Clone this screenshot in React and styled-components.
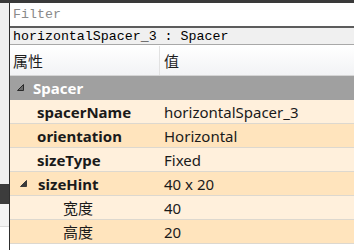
import React from "react";
import styled, { createGlobalStyle } from "styled-components";

const Global = createGlobalStyle`
  html, body { margin: 0; padding: 0; background: #ffffff; }
  body { width: 354px; height: 250px; overflow: hidden; font-family: "Noto Sans", "Noto Sans CJK SC", sans-serif; }
`;

const Page = styled.div`
  width: 354px;
  height: 250px;
  display: flex;
  flex-direction: column;
`;

const TopBar = styled.div`
  height: 3px;
  background: #3a3a3a;
  flex: none;
`;

const Body = styled.div`
  flex: 1;
  display: flex;
  min-height: 0;
`;

const LeftStrip = styled.div`
  width: 9px;
  flex: none;
  display: flex;
  flex-direction: column;
  background: #ffffff;
`;

const StripSeg = styled.div`
  height: ${(p) => p.$h}px;
  background: ${(p) => p.$bg};
  border-bottom: ${(p) => (p.$line ? "1px solid #dcdcdc" : "none")};
  flex: none;
`;

const Panel = styled.div`
  flex: 1;
  display: flex;
  flex-direction: column;
  border-left: 1px solid #2e2e2e;
  background: #ffffff;
`;

const FilterBox = styled.div`
  height: 23px;
  display: flex;
  align-items: center;
  padding-left: 3px;
  font-family: "Liberation Mono", monospace;
  font-size: 13.3px;
  color: #8a8a8a;
  background: #ffffff;
  border-bottom: 2px solid #5c5c5c;
`;

const ObjectLabel = styled.div`
  height: 16px;
  display: flex;
  align-items: center;
  padding-left: 3px;
  font-family: "Liberation Mono", monospace;
  font-size: 13.3px;
  color: #000;
  background: #f0f0f0;
  border-bottom: 1px solid #a8a8a8;
  white-space: pre;
`;

const Header = styled.div`
  height: 29px;
  margin-top: 1px;
  display: grid;
  grid-template-columns: 150px 1fr;
  background: linear-gradient(#ffffff, #f2f3f5);
  border-bottom: 1px solid #d5d5d5;
`;

const HeaderCell = styled.div`
  display: flex;
  align-items: center;
  padding-left: ${(p) => p.$pl}px;
  font-size: 15px;
  color: #1e1e1e;
  border-right: ${(p) => (p.$sep ? "1px solid #e2e2e2" : "none")};
`;

const Row = styled.div`
  height: 23px;
  display: grid;
  grid-template-columns: 150px 1fr;
  background: ${(p) => p.$bg};
  border-bottom: 1px solid ${(p) => p.$line};
`;

const NameCell = styled.div`
  display: flex;
  align-items: center;
  position: relative;
  padding-left: ${(p) => p.$pl}px;
  font-size: 15px;
  font-weight: ${(p) => (p.$bold ? 700 : 400)};
  color: ${(p) => p.$color || "#1a1a1a"};
  white-space: nowrap;
`;

const ValueCell = styled.div`
  display: flex;
  align-items: center;
  padding-left: 4px;
  font-size: 15px;
  color: #1a1a1a;
  white-space: nowrap;
`;

const Arrow = styled.svg`
  position: absolute;
  left: ${(p) => p.$x}px;
  top: 8px;
  width: 7px;
  height: 7px;
`;

const ExpandArrow = ({ x, fill, stroke }) => (
  <Arrow $x={x} viewBox="0 0 7 7">
    <polygon points="6.5,0.5 6.5,6.5 0.5,6.5" fill={fill} stroke={stroke} strokeWidth="1" />
  </Arrow>
);

const LIGHT = "#fff0dc";
const DARK = "#ffe4bd";
const LINE = "#ddd8cf";

const rows = [
  { name: "spacerName", value: "horizontalSpacer_3", bg: LIGHT, pl: 27, bold: true },
  { name: "orientation", value: "Horizontal", bg: DARK, pl: 27, bold: true },
  { name: "sizeType", value: "Fixed", bg: LIGHT, pl: 27, bold: true },
  { name: "sizeHint", value: "40 x 20", bg: DARK, pl: 28, bold: true, arrow: 10 },
  { name: "宽度", value: "40", bg: LIGHT, pl: 53 },
  { name: "高度", value: "20", bg: DARK, pl: 53 },
];

export default function App() {
  return (
    <Page>
      <Global />
      <TopBar />
      <Body>
        <LeftStrip>
          <StripSeg $h={181} $bg="#f0f0f0" />
          <StripSeg $h={20} $bg="#3c3c3c" />
          <StripSeg $h={22} $bg="#f4f4f4" $line />
        </LeftStrip>
        <Panel>
          <FilterBox>Filter</FilterBox>
          <ObjectLabel>horizontalSpacer_3 : Spacer</ObjectLabel>
          <Header>
            <HeaderCell $pl={3} $sep>属性</HeaderCell>
            <HeaderCell $pl={4}>值</HeaderCell>
          </Header>
          <Row $bg="#a0a0a0" $line="#a0a0a0">
            <NameCell $pl={23} $bold $color="#ffffff">
              <ExpandArrow x={7} fill="#6a6a6a" stroke="#2a2a2a" />
              Spacer
            </NameCell>
            <ValueCell />
          </Row>
          {rows.map((r) => (
            <Row key={r.name} $bg={r.bg} $line={LINE}>
              <NameCell $pl={r.pl} $bold={r.bold}>
                {r.arrow != null && <ExpandArrow x={r.arrow} fill="#3a3a3a" stroke="#3a3a3a" />}
                {r.name}
              </NameCell>
              <ValueCell>{r.value}</ValueCell>
            </Row>
          ))}
        </Panel>
      </Body>
    </Page>
  );
}
